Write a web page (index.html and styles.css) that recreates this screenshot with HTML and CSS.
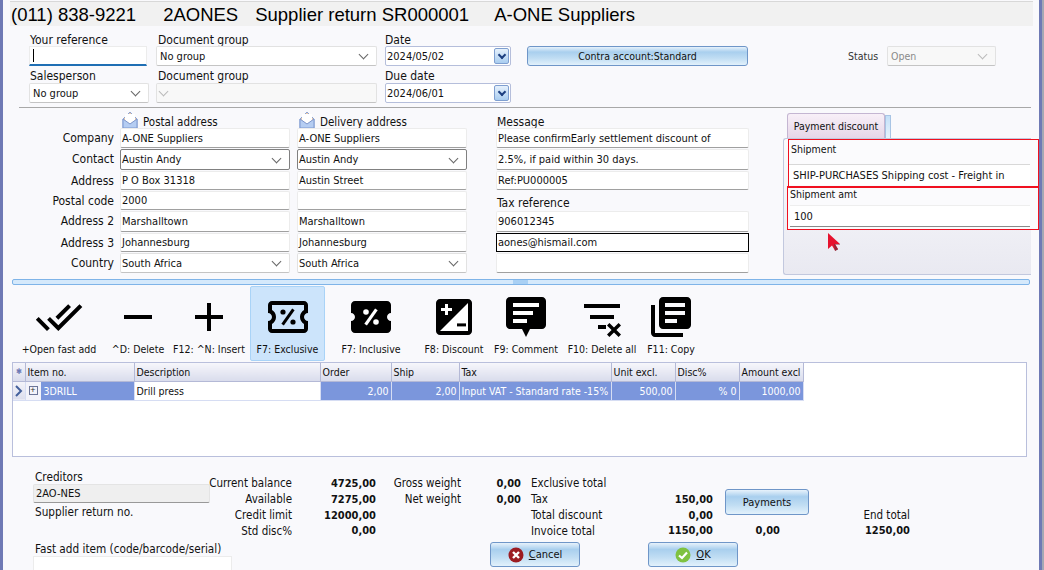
FILE: index.html
```html
<!DOCTYPE html>
<html lang="en">
<head>
    <meta charset="UTF-8">
    <meta name="viewport" content="width=device-width, initial-scale=1.0">
    <title>Supplier return SR000001</title>
    <link rel="stylesheet" href="styles.css">
</head>
<body>
    <div class="window">
        <div class="title-bar">
            <span class="title-phone">(011) 838-9221</span>
            <span class="title-code">2AONES</span>
            <span class="title-doc">Supplier return SR000001</span>
            <span class="title-name">A-ONE Suppliers</span>
        </div>

        <div class="doc-head">
            <div class="head-row head-row-top">
                <label>Your reference</label>
                <label>Document group</label>
                <label>Date</label>
                <span></span>
                <span></span>
                <div class="field ref-input"><span class="caret"></span></div>
                <div class="field combo w-doc">No group</div>
                <div class="field date w-date">2024/05/02<span class="date-btn"></span></div>
                <button class="glass-btn contra">Contra account:Standard</button>
                <div class="status">
                    <span>Status</span>
                    <div class="field combo disabled">Open</div>
                </div>
            </div>
            <div class="head-row">
                <label>Salesperson</label>
                <label>Document group</label>
                <label>Due date</label>
                <span></span>
                <span></span>
                <div class="field combo w-sales">No group</div>
                <div class="field combo disabled w-doc"></div>
                <div class="field date w-date">2024/06/01<span class="date-btn"></span></div>
            </div>
        </div>

        <div class="address-area">
            <span></span>
            <div class="addr-title">
                <svg class="envelope" viewBox="0 0 16 18"><path d="M1 8 8 1l7 7v9H1z" fill="#f0c9a4" stroke="#8aa4d6"/><path d="M3 9V3h10v6l-5 4z" fill="#fff"/><path d="m1 8 7 5 7-5v9H1z" fill="#b5cdf2" stroke="#7d98d0"/></svg>
                <span>Postal address</span>
            </div>
            <div class="addr-title">
                <svg class="envelope" viewBox="0 0 16 18"><path d="M1 8 8 1l7 7v9H1z" fill="#f0c9a4" stroke="#8aa4d6"/><path d="M3 9V3h10v6l-5 4z" fill="#fff"/><path d="m1 8 7 5 7-5v9H1z" fill="#b5cdf2" stroke="#7d98d0"/></svg>
                <span>Delivery address</span>
            </div>
            <div class="addr-title msg-title">Message</div>

            <div class="tab-panel">
                <div class="tabs">
                    <div class="tab">Payment discount</div>
                    <div class="tab-stub"></div>
                </div>
                <div class="tab-body">
                    <div class="ship-box">
                        <div class="ship-label">Shipment</div>
                        <div class="ship-value">SHIP-PURCHASES Shipping cost - Freight in</div>
                    </div>
                    <div class="ship-box ship-box-amt">
                        <div class="ship-label">Shipment amt</div>
                        <div class="ship-value ship-value-amt">100</div>
                    </div>
                    <svg class="cursor" viewBox="0 0 14 18"><path d="M1 0v16l4-3.500 3 5 3-1.500-3-5h5z" fill="#e6122e"/><path d="M8 18l3-1.500-3-5h5L13 11H7z" fill="#8c2a3a"/></svg>
                </div>
            </div>

            <div class="addr-label">Company</div>
            <div class="field">A-ONE Suppliers</div>
            <div class="field">A-ONE Suppliers</div>
            <div class="field msg-field">Please confirmEarly settlement discount of</div>

            <div class="addr-label">Contact</div>
            <div class="field combo strong">Austin Andy</div>
            <div class="field combo strong">Austin Andy</div>
            <div class="field msg-field">2.5%, if paid within 30 days.</div>

            <div class="addr-label">Address</div>
            <div class="field">P O Box 31318</div>
            <div class="field">Austin Street</div>
            <div class="field msg-field">Ref:PU000005</div>

            <div class="addr-label">Postal code</div>
            <div class="field">2000</div>
            <div class="field"></div>
            <div class="tax-label">Tax reference</div>

            <div class="addr-label">Address 2</div>
            <div class="field">Marshalltown</div>
            <div class="field">Marshalltown</div>
            <div class="field msg-field">906012345</div>

            <div class="addr-label">Address 3</div>
            <div class="field">Johannesburg</div>
            <div class="field">Johannesburg</div>
            <div class="field msg-field focused">aones@hismail.com</div>

            <div class="addr-label">Country</div>
            <div class="field combo">South Africa</div>
            <div class="field combo">South Africa</div>
            <div class="field msg-field"></div>
        </div>

        <div class="splitter"><span class="splitter-grip"></span></div>

        <div class="toolbar">
            <div class="tool">
                <svg viewBox="0 0 24 24"><path d="M18 7l-1.410-1.410-6.340 6.340 1.410 1.410L18 7zm4.240-1.410L11.660 16.170 7.480 12l-1.410 1.410L11.660 19l12-12-1.420-1.410zM.41 13.410L6 19l1.410-1.410L1.830 12 .41 13.410z"/></svg>
                <span>+Open fast add</span>
            </div>
            <div class="tool">
                <svg viewBox="0 0 24 24"><path d="M19 13H5v-2h14v2z"/></svg>
                <span>^D: Delete</span>
            </div>
            <div class="tool">
                <svg viewBox="0 0 24 24"><path d="M19 13h-6v6h-2v-6H5v-2h6V5h2v6h6v2z"/></svg>
                <span>F12: ^N: Insert</span>
            </div>
            <div class="tool active">
                <svg viewBox="0 0 24 24"><path d="M22 10V6c0-1.110-.9-2-2-2H4c-1.100 0-1.990.89-1.990 2v4c1.100 0 1.990.9 1.990 2s-.89 2-2 2v4c0 1.100.9 2 2 2h16c1.100 0 2-.9 2-2v-4c-1.100 0-2-.9-2-2s.9-2 2-2zm-2-1.460c-1.190.69-2 1.990-2 3.460s.81 2.770 2 3.460V18H4v-2.540c1.190-.69 2-1.990 2-3.460 0-1.480-.8-2.770-1.990-3.460L4 6h16v2.540z"/><circle cx="9.500" cy="9.500" r="1.300"/><circle cx="14.500" cy="14.500" r="1.300"/><path d="M14.700 8.200 9.300 15.800" stroke="#000" stroke-width="1.500"/></svg>
                <span>F7: Exclusive</span>
            </div>
            <div class="tool">
                <svg viewBox="0 0 24 24"><path d="M22 10V6c0-1.110-.9-2-2-2H4c-1.100 0-1.990.89-1.990 2v4c1.100 0 1.990.9 1.990 2s-.89 2-2 2v4c0 1.100.9 2 2 2h16c1.100 0 2-.9 2-2v-4c-1.100 0-2-.9-2-2s.9-2 2-2z"/><circle cx="9.500" cy="9.500" r="1.400" fill="#fff"/><circle cx="14.500" cy="14.500" r="1.400" fill="#fff"/><path d="M14.700 8.200 9.300 15.800" stroke="#fff" stroke-width="1.600"/></svg>
                <span>F7: Inclusive</span>
            </div>
            <div class="tool">
                <svg viewBox="0 0 24 24"><path d="M5 3h14c1.100 0 2 .9 2 2v14c0 1.100-.9 2-2 2H5c-1.100 0-2-.9-2-2V5c0-1.100.9-2 2-2z"/><path d="M19 5v14H5z" fill="#fff"/><path d="M7.500 5.500h1.500v2h2V9H9v2H7.500V9h-2V7.500h2z" fill="#fff"/><path d="M13.500 15.200H18v1.500h-4.500z"/></svg>
                <span>F8: Discount</span>
            </div>
            <div class="tool">
                <svg viewBox="0 0 24 24"><path d="M4 2h16c1.100 0 2 .9 2 2v12c0 1.100-.9 2-2 2h-6l-2 4-2-4H4c-1.100 0-2-.9-2-2V4c0-1.100.9-2 2-2z"/><path d="M5.500 5h13v2h-13zM5.500 9h10v2h-10zM5.500 13h7v2h-7z" fill="#fff"/></svg>
                <span>F9: Comment</span>
            </div>
            <div class="tool">
                <svg viewBox="0 0 24 24"><path d="M3 5.500h18v2H3zM6 11h12v2H6zM10 16h4v2h-4zM15.700 15l2.300 2.300 2.300-2.300 1.200 1.200-2.300 2.300 2.300 2.300-1.200 1.200L18 19.700 15.700 22l-1.200-1.200 2.300-2.300-2.300-2.300z"/></svg>
                <span>F10: Delete all</span>
            </div>
            <div class="tool">
                <svg viewBox="0 0 24 24"><path d="M4 6H2v14c0 1.100.9 2 2 2h14v-2H4V6zm16-4H8c-1.100 0-2 .9-2 2v12c0 1.100.9 2 2 2h12c1.100 0 2-.9 2-2V4c0-1.100-.9-2-2-2zm-1 9H9V9h10v2zm-4 4H9v-2h6v2zm4-8H9V5h10v2z"/></svg>
                <span>F11: Copy</span>
            </div>
        </div>

        <div class="lines">
            <table>
                <colgroup>
                    <col class="c-ind"><col class="c-item"><col class="c-desc"><col class="c-qty"><col class="c-ship">
                    <col class="c-tax"><col class="c-amt"><col class="c-amt"><col class="c-amt">
                </colgroup>
                <thead>
                    <tr>
                        <th class="star">✱</th>
                        <th>Item no.</th>
                        <th>Description</th>
                        <th>Order</th>
                        <th>Ship</th>
                        <th>Tax</th>
                        <th>Unit excl.</th>
                        <th>Disc%</th>
                        <th>Amount excl</th>
                    </tr>
                </thead>
                <tbody>
                    <tr>
                        <td class="row-head"><svg viewBox="0 0 8 12"><path d="M1 1l5 5-5 5" fill="none" stroke="#44609c" stroke-width="2"/></svg></td>
                        <td class="item-cell"><span class="expander"><i>+</i></span><span class="item-code">3DRILL</span></td>
                        <td class="plain">Drill press</td>
                        <td class="num">2,00</td>
                        <td class="num">2,00</td>
                        <td>Input VAT - Standard rate -15%</td>
                        <td class="num">500,00</td>
                        <td class="num">% 0</td>
                        <td class="num">1000,00</td>
                    </tr>
                </tbody>
            </table>
        </div>

        <div class="footer">
            <div class="foot-left">
                <div class="foot-caption">Creditors</div>
                <div class="creditor">2AO-NES</div>
                <div class="foot-caption sup-no">Supplier return no.</div>
                <div class="foot-caption fast-add">Fast add item (code/barcode/serial)</div>
                <div class="fast-input"></div>
            </div>
            <div class="foot-right">
                <div class="totals">
                    <span class="t-label">Current balance</span><b>4725,00</b><span class="t-label">Gross weight</span><b>0,00</b><span class="t-text">Exclusive total</span><span></span><span></span><span></span>
                    <span class="t-label">Available</span><b>7275,00</b><span class="t-label">Net weight</span><b>0,00</b><span class="t-text">Tax</span><b>150,00</b>
                    <button class="glass-btn payments">Payments</button><span></span>
                    <span class="t-label">Credit limit</span><b>12000,00</b><span></span><span></span><span class="t-text">Total discount</span><b>0,00</b><span class="t-label">End total</span>
                    <span class="t-label">Std disc%</span><b>0,00</b><span></span><span></span><span class="t-text">Invoice total</span><b>1150,00</b><b>0,00</b><b>1250,00</b>
                </div>
                <div class="actions">
                    <button class="glass-btn action">
                        <svg viewBox="0 0 16 16"><circle cx="8" cy="8" r="7.500" fill="#9c1c22"/><path d="M5 5l6 6M11 5l-6 6" stroke="#fff" stroke-width="2.400"/></svg>
                        <span><u>C</u>ancel</span>
                    </button>
                    <button class="glass-btn action">
                        <svg viewBox="0 0 16 16"><circle cx="8" cy="8" r="7.500" fill="#7fc241"/><path d="M4 8.500l3 2.500 5-5.500" fill="none" stroke="#fff" stroke-width="2.200"/></svg>
                        <span><u>O</u>K</span>
                    </button>
                </div>
            </div>
        </div>
    </div>
</body>
</html>
```

FILE: styles.css
```css
* {
    box-sizing: border-box;
}

body {
    margin: 0;
    width: 1044px;
    height: 570px;
    overflow: hidden;
    background-color: #a4a8b4;
    font-family: "DejaVu Sans Condensed", "DejaVu Sans", sans-serif;
    font-stretch: condensed;
    font-size: 11px;
    color: #111;
}

.window {
    width: 1042px;
    height: 570px;
    background-color: #f9f9fc;
    border-left: 3px solid #6f7ab5;
    border-right: 3px solid #6f7ab5;
    overflow: hidden;
}

/* title strip */
.title-bar {
    display: flex;
    height: 25px;
    margin: 1px 6px 0 7px;
    padding-left: 1px;
    background-color: #f1f1f1;
    border-top: 1px solid #d8d8d8;
    font-family: "Liberation Sans", sans-serif;
    font-stretch: normal;
    font-size: 18.5px;
    line-height: 25px;
    color: #000;
    white-space: nowrap;
}

.title-code {
    margin-left: 27px;
}

.title-doc {
    margin-left: 17px;
}

.title-name {
    margin-left: 25px;
}

/* top fields */
.doc-head {
    height: 82px;
    margin: 0 8px 0 16px;
    padding: 7px 0 0 10px;
    border-bottom: 1px solid #a8a8a8;
}

.head-row {
    display: grid;
    grid-template-columns: 127px 229px 142px 321px 149px;
    grid-template-rows: 15px 20px;
    align-items: center;
}

.head-row-top {
    grid-template-rows: 13px 20px;
    margin-bottom: 2px;
}

.head-row label {
    padding-left: 1px;
    font-size: 12px;
    white-space: nowrap;
}

.head-row label:nth-child(2) {
    padding-left: 2px;
}

.head-row label:nth-child(3) {
    padding-left: 0;
}

.field {
    display: flex;
    align-items: center;
    justify-content: space-between;
    height: 100%;
    padding: 0 3px;
    background-color: #fff;
    border: 1px solid #ececec;
    border-bottom-color: #a0a0a0;
    border-radius: 2px;
    white-space: nowrap;
    overflow: hidden;
}

.combo {
    padding-right: 9px;
    border-color: #e2e2e2;
    border-bottom-color: #c4c4c4;
}

.combo::after {
    content: "";
    width: 6px;
    height: 6px;
    margin-top: -3px;
    border-right: 1px solid #666;
    border-bottom: 1px solid #666;
    transform: rotate(45deg);
}

.combo.strong {
    border-color: #808080;
}

.disabled {
    background-color: #f8f8f8;
    color: #8a8a8a;
}

.disabled::after {
    border-color: #bbb;
}

.ref-input {
    width: 118px;
    justify-content: flex-start;
    border-bottom: 2px solid #1f6fb4;
    border-radius: 0;
}

.caret {
    width: 1px;
    height: 13px;
    background-color: #000;
}

.w-doc {
    width: 221px;
}

.w-sales {
    width: 120px;
}

.w-date {
    width: 126px;
}

.date {
    padding: 0 1px;
    border-color: #b5bedb;
}

.date-btn {
    display: flex;
    align-items: center;
    justify-content: center;
    width: 15px;
    height: 16px;
    background: linear-gradient(#e6f1fc, #a9cdf0);
    border: 1px solid #7f9fd0;
    border-radius: 2px;
}

.date-btn::after {
    content: "";
    width: 4px;
    height: 4px;
    margin-top: -2px;
    border-right: 2px solid #1d3f80;
    border-bottom: 2px solid #1d3f80;
    transform: rotate(45deg);
}

.glass-btn {
    font: inherit;
    color: #111;
    background: linear-gradient(#e7f2fb 0, #a9cfee 28%, #c0ddf3 62%, #e2f1fb 100%);
    border: 1px solid #6f96c8;
    border-radius: 3px;
    padding: 0;
}

.contra {
    width: 221px;
    height: 20px;
    margin-top: -1px;
    font-size: 10.5px;
}

.status {
    display: flex;
    align-items: center;
    gap: 9px;
    height: 100%;
    font-size: 10.5px;
    color: #333;
}

.status .field {
    width: 109px;
}

/* address block */
.address-area {
    display: grid;
    grid-template-columns: 101px 177px 199px 287px 248px;
    grid-template-rows: 18px 21px 22px 20px 20px 22px 20px 21px;
    margin: 2px 0 0 16px;
}

.address-area .field {
    width: 170px;
    height: calc(100% - 1px);
    padding-left: 1px;
}

.address-area .msg-field {
    width: 253px;
}

.addr-title {
    display: flex;
    align-items: flex-end;
    gap: 5px;
    margin: 0 0 -1px 2px;
    font-size: 11.5px;
    line-height: 14px;
}

.msg-title {
    margin-left: 1px;
    font-size: 12px;
}

.envelope {
    width: 16px;
    height: 18px;
}

.addr-label {
    padding-right: 6px;
    font-size: 12px;
    line-height: 21px;
    text-align: right;
}

.tax-label {
    align-self: end;
    padding-left: 1px;
    font-size: 12px;
    line-height: 16px;
}

.address-area .focused {
    border: 1px solid #000;
    border-radius: 0;
}

/* shipment tab */
.tab-panel {
    grid-column: 5;
    grid-row: 1 / -1;
    display: flex;
    flex-direction: column;
    height: 162px;
    margin-top: 3px;
}

.tabs {
    display: flex;
    height: 25px;
    margin-left: 4px;
}

.tab {
    width: 98px;
    padding-top: 6px;
    font-size: 10.5px;
    text-align: center;
    background: linear-gradient(#f8f0f8, #e6d6e8);
    border: 1px solid #c4b6d2;
    border-bottom: none;
    border-radius: 3px 3px 0 0;
}

.tab-stub {
    width: 6px;
    margin-top: 2px;
    background: linear-gradient(#c4e0f8, #e8f4fd);
    border: 1px solid #a8c4e4;
    border-bottom: none;
}

.tab-body {
    position: relative;
    flex: 1;
    background: linear-gradient(#fbfbfd, #e9e9f1);
    border: 1px solid #c2c8de;
    border-right: none;
    border-radius: 3px 0 0 3px;
}

.ship-box {
    height: 47px;
    margin: 0 -9px 0 4px;
    background-color: #fbfbfd;
    border: 1px solid #f01020;
    border-bottom-width: 0;
    border-right-width: 2px;
}

.ship-box-amt {
    height: 44px;
    margin-left: 3px;
    border-width: 2px 2px 1px 1px;
}

.ship-label {
    height: 24px;
    padding: 3px 0 0 2px;
    font-size: 10.5px;
}

.ship-value {
    height: 21px;
    margin-right: 8px;
    padding: 4px 0 0 4px;
    background-color: #fff;
    border-top: 1px solid #d8d8d8;
    white-space: nowrap;
}

.ship-box-amt .ship-label {
    height: 17px;
    padding-top: 0;
}

.ship-value-amt {
    height: 22px;
    margin-left: 2px;
    border-top-color: #eee;
    border-bottom: 1px solid #8a8a8a;
}

.cursor {
    position: absolute;
    left: 43px;
    top: 94px;
    width: 14px;
    height: 18px;
}

/* splitter between address block and lines */
.splitter {
    position: relative;
    height: 6px;
    margin: 5px 9px 0 9px;
    background-color: #d5e9fb;
    border: 1px solid #7fb4e8;
    border-radius: 2px;
}

.splitter-grip {
    position: absolute;
    left: 500px;
    top: 0;
    width: 15px;
    height: 4px;
    background-color: #a9d0f4;
}

/* icon toolbar */
.toolbar {
    display: flex;
    height: 77px;
    padding: 1px 0 0 19px;
    font-size: 10.5px;
}

.tool {
    display: flex;
    flex-direction: column;
    align-items: center;
    flex: none;
    width: 74px;
    height: 75px;
    padding-top: 6px;
    border: 1px solid transparent;
    border-radius: 2px;
    white-space: nowrap;
}

.tool:nth-child(2) {
    width: 60px;
    margin-left: 12px;
}

.tool:nth-child(3) {
    width: 78px;
    margin-left: 2px;
}

.tool:nth-child(4) {
    width: 75px;
    margin-left: 2px;
}

.tool:nth-child(5),
.tool:nth-child(6) {
    margin-left: 9px;
}

.tool:nth-child(7) {
    width: 68px;
    margin-left: 1px;
}

.tool:nth-child(8) {
    width: 72px;
    margin-left: 6px;
}

.tool:nth-child(9) {
    width: 60px;
    margin-left: 3px;
}

.tool svg {
    flex: none;
    width: 48px;
    height: 48px;
}

.tool span {
    line-height: 16px;
}

.active {
    background-color: #cce4fb;
    border-color: #a9d3f7;
}

/* line items */
.lines {
    height: 95px;
    margin: 0 12px 0 9px;
    background-color: #fff;
    border: 1px solid #b9bfdc;
}

table {
    width: 790px;
    table-layout: fixed;
    border-collapse: collapse;
}

.c-ind { width: 12px; }
.c-item { width: 109px; }
.c-desc { width: 186px; }
.c-qty { width: 71px; }
.c-ship { width: 68px; }
.c-tax { width: 152px; }
.c-amt { width: 64px; }

th {
    height: 18px;
    padding: 0 2px;
    font-weight: normal;
    font-size: 10.5px;
    text-align: left;
    white-space: nowrap;
    overflow: hidden;
    background: linear-gradient(#f6f6fb, #d9dcec);
    border-right: 1px solid #b4b9d6;
    border-bottom: 1px solid #b4b9d6;
}

th.star {
    padding: 0;
    font-size: 8px;
    text-align: center;
    color: #6f7ab5;
}

td {
    height: 19px;
    padding: 0 2px;
    font-size: 10.5px;
    color: #fff;
    white-space: nowrap;
    overflow: hidden;
    background-color: #7b96dc;
    border-right: 1px solid #d6ddf3;
    border-bottom: 1px solid #d6ddf3;
}

.row-head {
    padding: 0 0 0 2px;
    background: linear-gradient(#f4f4fa, #dcdeed);
}

.row-head svg {
    display: block;
    width: 8px;
    height: 12px;
}

.item-cell {
    padding: 0;
    background-color: #f3f3fa;
}

.item-cell > span {
    display: inline-flex;
    align-items: center;
    height: 18px;
    vertical-align: top;
}

.expander {
    justify-content: center;
    width: 15px;
}

.expander i {
    width: 9px;
    height: 9px;
    font: 9px/7px "Liberation Sans", sans-serif;
    text-align: center;
    color: #333;
    border: 1px solid #6c7598;
}

.item-code {
    width: 93px;
    padding-left: 3px;
    background-color: #7b96dc;
}

td.plain {
    color: #111;
    background-color: #fff;
}

.num {
    text-align: right;
}

/* totals and buttons */
.footer {
    display: flex;
    height: 113px;
    padding: 13px 0 0 30px;
}

.foot-left {
    flex: none;
    width: 199px;
}

.foot-caption {
    padding-left: 2px;
    font-size: 11.7px;
    line-height: 14px;
    white-space: nowrap;
}

.creditor {
    width: 177px;
    height: 19px;
    padding: 1px 0 0 2px;
    line-height: 16px;
    background-color: #efefef;
    border: 1px solid #e4e4e4;
    border-bottom-color: #999;
    border-radius: 2px;
}

.sup-no {
    margin-top: 2px;
}

.fast-add {
    margin-top: 23px;
}

.fast-input {
    height: 20px;
    background-color: #fff;
    border: 1px solid #ececec;
}

.foot-right {
    display: flex;
    flex-direction: column;
}

.totals {
    display: grid;
    grid-template-columns: 60px 84px 85px 60px 128px 64px 67px 130px;
    grid-template-rows: 16px 16px 16px 15px;
    align-items: center;
    margin-top: 5px;
    white-space: nowrap;
}

.totals b {
    text-align: right;
}

.t-label {
    justify-self: end;
    font-size: 11.5px;
}

.t-text {
    margin-left: 10px;
    font-size: 11.5px;
}

.payments {
    grid-column: 7;
    grid-row: 2 / 4;
    align-self: start;
    justify-self: start;
    width: 84px;
    height: 26px;
    margin: -2px 0 0 12px;
}

.actions {
    display: flex;
    gap: 68px;
    margin: 4px 0 0 258px;
}

.action {
    display: flex;
    align-items: center;
    justify-content: center;
    gap: 5px;
    flex: none;
    width: 90px;
    height: 25px;
}

.action svg {
    width: 16px;
    height: 16px;
}
```
